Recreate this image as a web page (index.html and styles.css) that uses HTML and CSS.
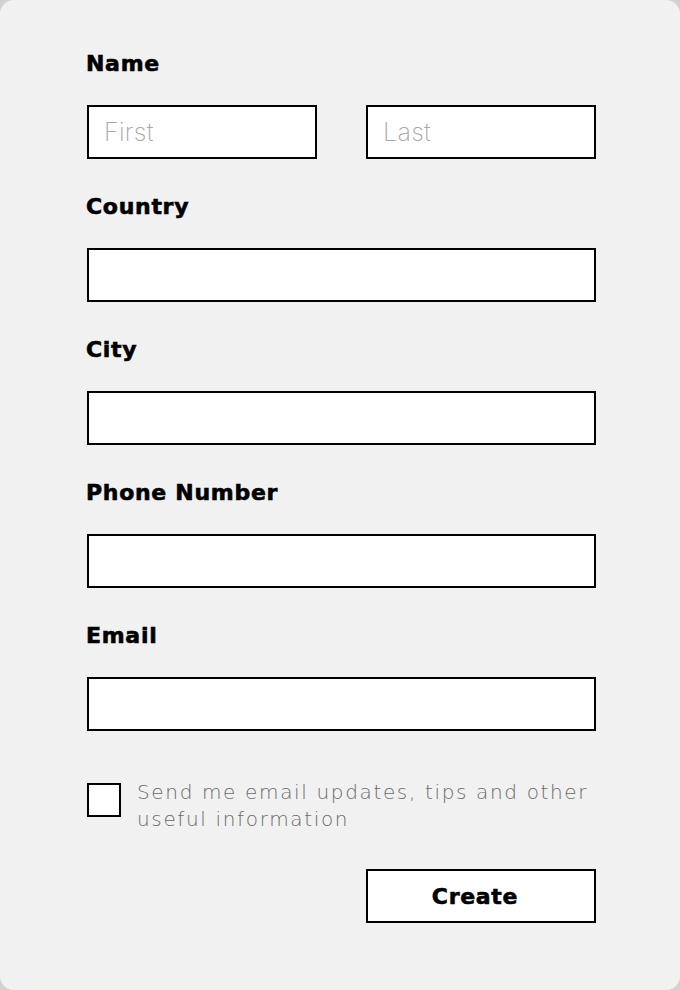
FILE: index.html
```html
<!DOCTYPE html>
<html lang="en">
<head>
<meta charset="utf-8">
<link rel="stylesheet" href="styles.css">
</head>
<body>
<div class="card">
  <form class="form">
    <div class="field">
      <label class="label">Name</label>
      <div class="pair">
        <input class="input" type="text" placeholder="First">
        <input class="input" type="text" placeholder="Last">
      </div>
    </div>
    <div class="field">
      <label class="label">Country</label>
      <input class="input" type="text">
    </div>
    <div class="field">
      <label class="label">City</label>
      <input class="input" type="text">
    </div>
    <div class="field">
      <label class="label">Phone Number</label>
      <input class="input" type="text">
    </div>
    <div class="field">
      <label class="label">Email</label>
      <input class="input" type="text">
    </div>
    <label class="check">
      <span class="box"></span>
      <span class="check-text">Send me email updates, tips and other useful information</span>
    </label>
    <div class="actions">
      <button class="btn" type="button">Create</button>
    </div>
  </form>
</div>
</body>
</html>
```
FILE: styles.css
```css
html, body {
  margin: 0;
  padding: 0;
  background: #d6d1cc;
}
.card {
  width: 680px;
  height: 990px;
  box-sizing: border-box;
  background: #f1f1f1;
  border-radius: 14px;
  padding: 49px 84px 0 87px;
  font-family: "Inter", sans-serif;
}
.form {
  display: flex;
  flex-direction: column;
  width: 509px;
}
.field {
  display: flex;
  flex-direction: column;
  margin-bottom: 33px;
}
.label {
  font-family: "DejaVu Sans", sans-serif;
  font-weight: 700;
  font-size: 22px;
  line-height: 30px;
  letter-spacing: 0.7px;
  -webkit-text-stroke: 0.6px #000;
  color: #000;
  margin-left: -1px;
  margin-bottom: 26px;
}
.pair {
  display: flex;
  justify-content: space-between;
}
.pair .input {
  width: 230px;
}
.input {
  box-sizing: border-box;
  width: 509px;
  height: 54px;
  border: 2px solid #000;
  background: #fff;
  padding: 0 15px;
  font-family: "Inter", sans-serif;
  font-weight: 200;
  font-size: 25px;
  letter-spacing: 0.3px;
  color: #000;
  outline: none;
  border-radius: 0;
}
.input::placeholder {
  color: #a8a8a8;
  font-weight: 200;
}
.check {
  display: flex;
  align-items: flex-start;
  gap: 16px;
  margin-top: 15px;
}
.box {
  flex: none;
  box-sizing: border-box;
  width: 34px;
  height: 34px;
  border: 2px solid #000;
  background: #fff;
  margin-top: 4px;
}
.check-text {
  font-family: "DejaVu Sans", sans-serif;
  font-weight: 200;
  font-size: 20px;
  line-height: 27px;
  letter-spacing: 1.65px;
  color: #6a6a6a;
}
.actions {
  display: flex;
  justify-content: flex-end;
  margin-top: 36px;
}
.btn {
  box-sizing: border-box;
  width: 230px;
  height: 54px;
  border: 2px solid #000;
  background: #fff;
  font-family: "DejaVu Sans", sans-serif;
  font-weight: 700;
  font-size: 22px;
  letter-spacing: 0.7px;
  -webkit-text-stroke: 0.6px #000;
  color: #000;
  border-radius: 0;
  padding: 0 12px 0 0;
}
```
